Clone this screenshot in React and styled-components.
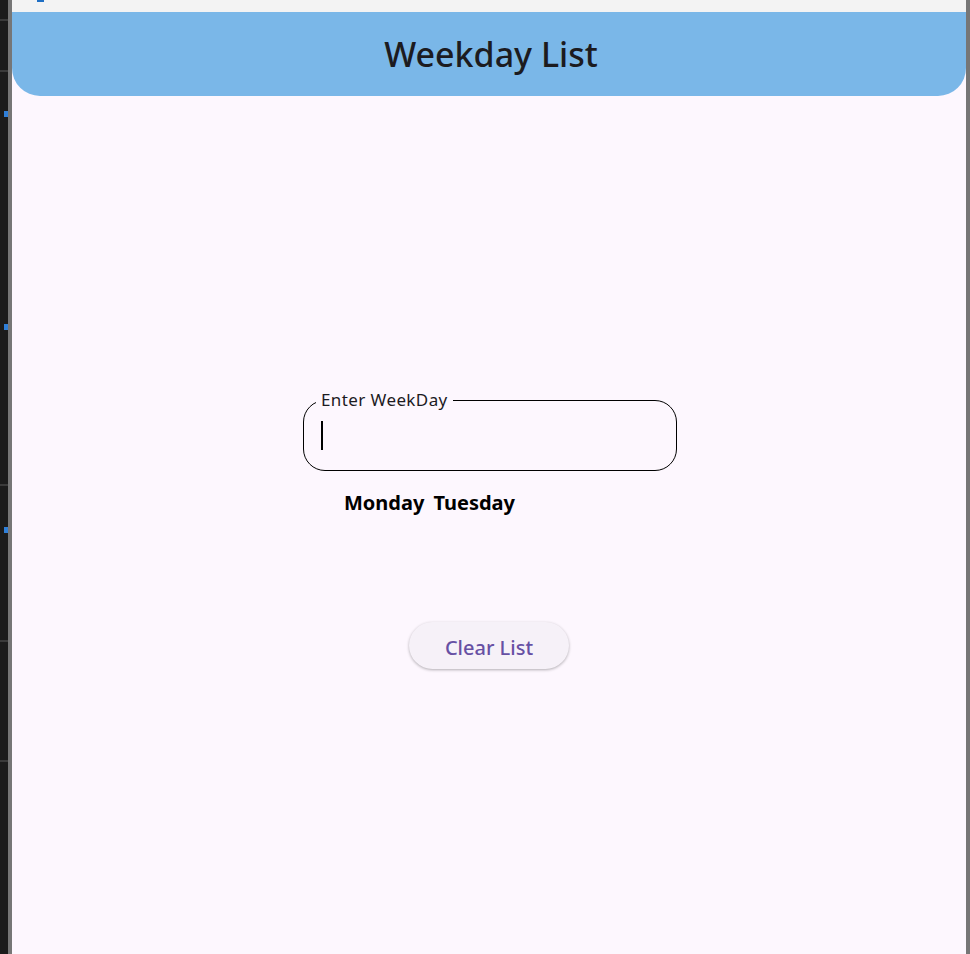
import React from "react";
import styled, { createGlobalStyle } from "styled-components";

const GlobalStyle = createGlobalStyle`
  html, body {
    margin: 0;
    padding: 0;
    background: #1b1b1b;
    font-family: "Noto Sans", "Open Sans", sans-serif;
  }
`;

const Frame = styled.div`
  display: flex;
  width: 970px;
  height: 954px;
  overflow: hidden;
`;

const SideStrip = styled.div`
  width: 8px;
  background: #1b1b1b;
  display: flex;
  flex-direction: column;
`;

const StripMark = styled.div`
  height: ${(p) => (p.$blue ? "6px" : "2px")};
  width: ${(p) => (p.$blue ? "4px" : "8px")};
  margin-left: ${(p) => (p.$blue ? "4px" : "0")};
  margin-top: ${(p) => p.$top}px;
  background: ${(p) => (p.$blue ? "#2f7fd8" : "#3a3a3a")};
`;

const Border = styled.div`
  width: 4px;
  background: #767676;
`;

const Window = styled.div`
  flex: 1;
  display: flex;
  flex-direction: column;
  background: #fdf7fe;
`;

const TitleStrip = styled.div`
  height: 12px;
  background: #f3f3f3;
  position: relative;
`;

const TitleMark = styled.div`
  position: absolute;
  left: 25px;
  top: 0;
  width: 7px;
  height: 2px;
  background: #1f6fc4;
`;

const Header = styled.header`
  height: 84px;
  background: #7ab7e8;
  border-radius: 0 0 28px 28px;
  display: flex;
  align-items: center;
  justify-content: center;
`;

const Title = styled.h1`
  margin: 0 0 0 4px;
  font-size: 34px;
  font-weight: 500;
  color: #1c1b1f;
`;

const Body = styled.main`
  flex: 1;
  display: flex;
  flex-direction: column;
  align-items: center;
  padding-top: 304px;
`;

const Field = styled.div`
  position: relative;
  width: 374px;
  height: 71px;
  box-sizing: border-box;
  border: 1.6px solid #000;
  border-radius: 22px;
  padding: 0 17px;
  margin-left: 2px;
  display: flex;
  align-items: center;
`;

const Label = styled.span`
  position: absolute;
  left: 12px;
  top: -11px;
  padding: 0 5px;
  background: #fdf7fe;
  font-size: 17px;
  letter-spacing: 0.4px;
  line-height: 20px;
  color: #1c1b1f;
`;

const Caret = styled.span`
  display: block;
  width: 2px;
  height: 29px;
  background: #000;
`;

const Days = styled.div`
  display: flex;
  gap: 9px;
  width: 374px;
  padding-left: 42px;
  box-sizing: border-box;
  margin-top: 18px;
`;

const Day = styled.span`
  font-size: 20px;
  font-weight: 700;
  color: #000;
  line-height: 28px;
`;

const ClearButton = styled.button`
  margin-top: 105px;
  width: 160px;
  height: 47px;
  border: none;
  border-radius: 24px;
  background: #f6f1f8;
  color: #6750a4;
  font-family: inherit;
  font-size: 20px;
  font-weight: 500;
  padding: 3px 0 0;
  box-shadow: 0 1px 3px rgba(0, 0, 0, 0.3);
  cursor: pointer;
`;

const marks = [
  { top: 19 },
  { top: 49 },
  { top: 39, blue: true },
  { top: 207, blue: true },
  { top: 154 },
  { top: 41, blue: true },
  { top: 107 },
  { top: 118 },
];

export default function App() {
  return (
    <>
      <GlobalStyle />
      <Frame>
        <SideStrip>
          {marks.map((m, i) => (
            <StripMark key={i} $top={m.top} $blue={m.blue} />
          ))}
        </SideStrip>
        <Border />
        <Window>
          <TitleStrip>
            <TitleMark />
          </TitleStrip>
          <Header>
            <Title>Weekday List</Title>
          </Header>
          <Body>
            <Field>
              <Label>Enter WeekDay</Label>
              <Caret />
            </Field>
            <Days>
              <Day>Monday</Day>
              <Day>Tuesday</Day>
            </Days>
            <ClearButton>Clear List</ClearButton>
          </Body>
        </Window>
        <Border />
      </Frame>
    </>
  );
}
